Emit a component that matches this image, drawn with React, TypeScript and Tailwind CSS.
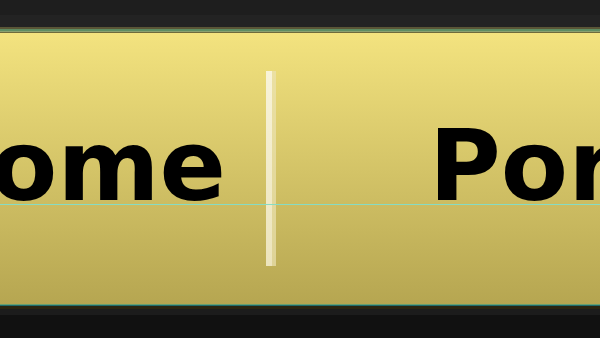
export default function App() {
  const font = { fontFamily: '"DejaVu Sans", "Liberation Sans", sans-serif' };
  return (
    <div className="w-full h-[338px] flex flex-col bg-[#111111] overflow-hidden">
      <div className="h-[15px] bg-[#1e1e1e]" />
      <div className="h-[12px] bg-[#232323]" />
      <div className="h-[2px] bg-[#5a5536]" />
      <div className="h-[2px] bg-[#5e8c62]" />
      <div className="h-[1px] bg-[#8aa070]" />
      <div className="h-[1px] bg-[#6e6b3c]" />
      <div className="relative h-[271px] bg-gradient-to-b from-[#f3e37f] to-[#b6a651] flex items-start">
        <div className="w-[226px] shrink-0 flex justify-end mt-[84px]">
          <span
            className="whitespace-nowrap text-[98px] leading-none font-bold text-black"
            style={font}
          >
            Home
          </span>
        </div>
        <div className="ml-[40px] mt-[38px] shrink-0 flex h-[195px]">
          <div className="w-[6px] h-full bg-gradient-to-b from-[#f8f3d8] to-[#ece4bc]" />
          <div className="w-[4px] h-full bg-[#ebe3b3]/70" />
        </div>
        <div className="ml-[153px] mt-[84px] shrink-0">
          <span
            className="whitespace-nowrap text-[98px] leading-none font-bold text-black"
            style={font}
          >
            Portal
          </span>
        </div>
        <div className="absolute left-0 right-0 top-[171px] h-[1px] bg-[#86dcc4]" />
      </div>
      <div className="h-[1px] bg-[#6aa070]" />
      <div className="h-[1px] bg-[#1f6b6b]" />
      <div className="h-[3px] bg-[#2b2510]" />
      <div className="h-[6px] bg-[#1c1c1c]" />
    </div>
  );
}
